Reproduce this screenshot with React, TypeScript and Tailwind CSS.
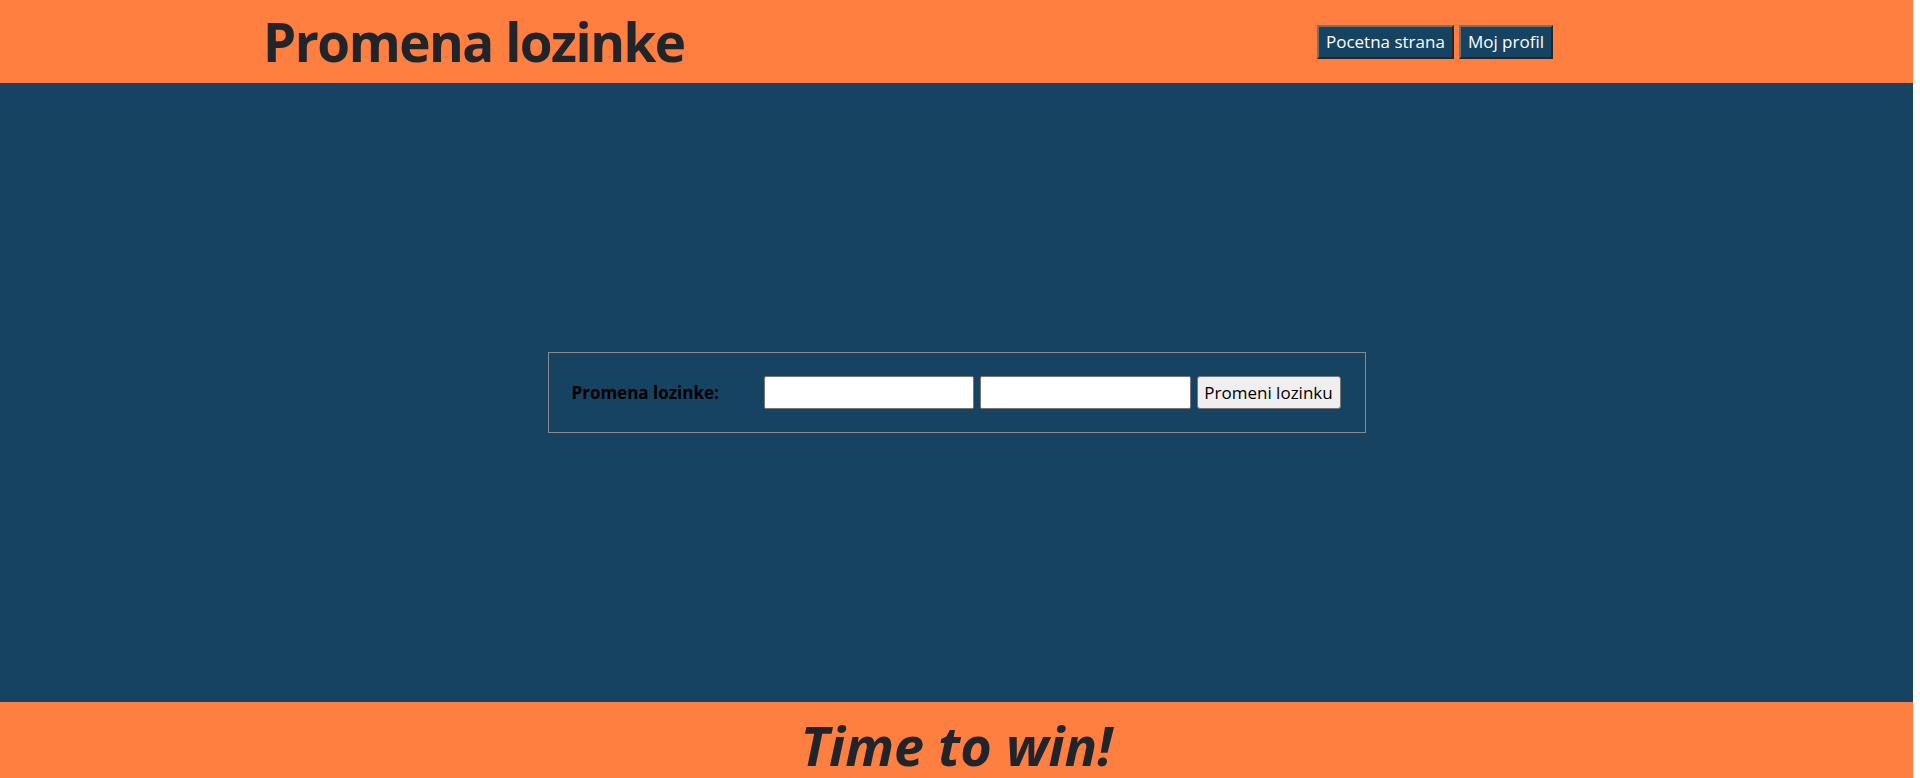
export default function App() {
  const font = { fontFamily: '"Open Sans", "Noto Sans", sans-serif' };
  return (
    <div className="w-[1913px] h-[778px] flex flex-col overflow-hidden text-[#212529]" style={font}>
      <header className="h-[83px] shrink-0 bg-[#ff7f41] flex items-center justify-between pl-[263px] pr-[360px]">
        <h1 className="text-[53px] font-bold leading-none tracking-[-1.5px] text-[#212529] mt-[0px]">Promena lozinke</h1>
        <div className="flex gap-[5px]">
          <button className="h-[34px] px-[7px] bg-[#174362] text-white text-[17px] border-2 border-t-[#6e7274] border-l-[#6e7274] border-r-[#262626] border-b-[#262626]">Pocetna strana</button>
          <button className="h-[34px] px-[7px] bg-[#174362] text-white text-[17px] border-2 border-t-[#6e7274] border-l-[#6e7274] border-r-[#262626] border-b-[#262626]">Moj profil</button>
        </div>
      </header>
      <main className="flex-1 bg-[#174362] flex items-center justify-center">
        <div className="w-[818px] h-[81px] border border-[#8a8a8a] flex items-center pl-[23px]">
          <span className="w-[192px] text-[17px] font-bold text-black">Promena lozinke:</span>
          <input type="password" className="w-[210px] h-[33px] bg-white border border-[#767676] rounded-[2px]" />
          <input type="password" className="ml-[6px] w-[211px] h-[33px] bg-white border border-[#767676] rounded-[2px]" />
          <button className="ml-[6px] w-[144px] h-[33px] bg-[#efefef] border border-[#767676] rounded-[3px] text-[17px] text-black">Promeni lozinku</button>
        </div>
      </main>
      <footer className="h-[76px] shrink-0 bg-[#ff7f41] flex justify-center pt-[16px]">
        <span className="text-[54px] font-bold italic leading-none tracking-[0px] text-[#212529]">Time to win!</span>
      </footer>
    </div>
  );
}
